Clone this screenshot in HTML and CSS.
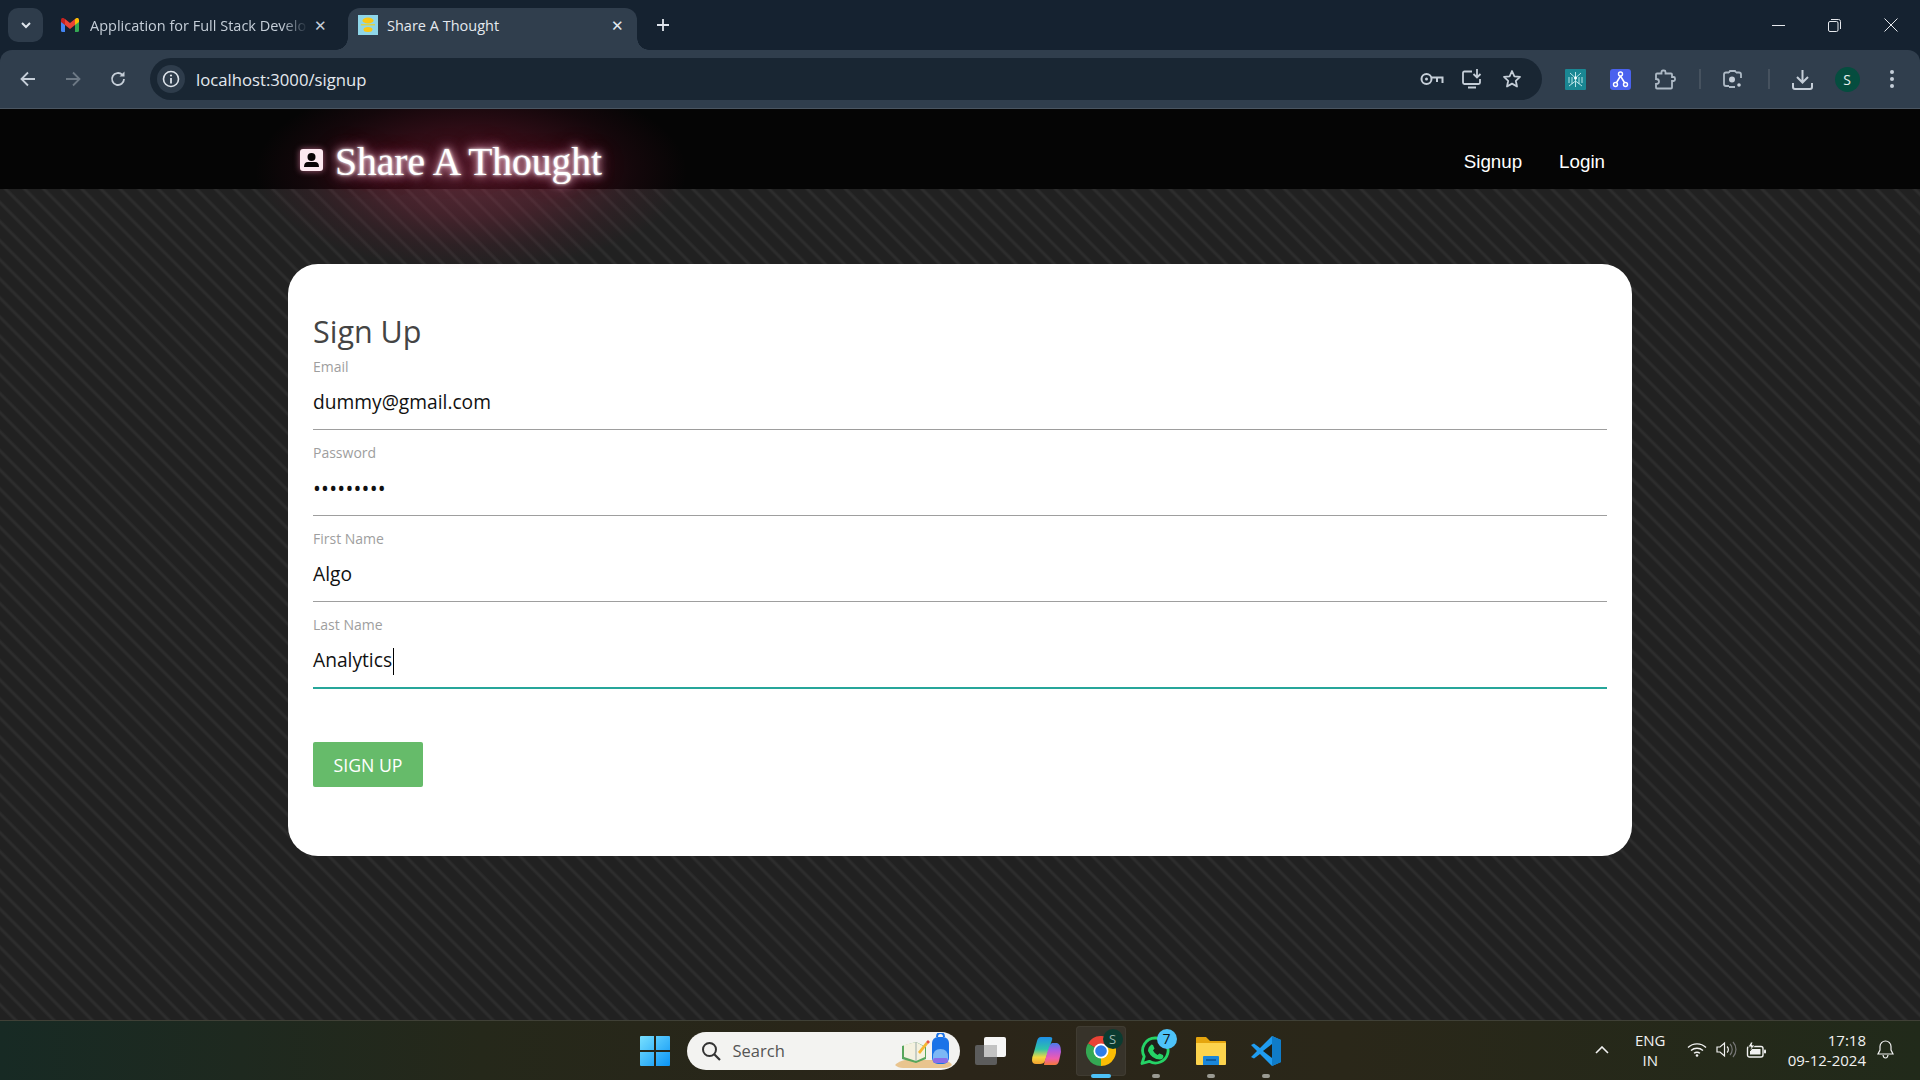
FILE: index.html
```html
<!DOCTYPE html>
<html lang="en">
<head>
    <meta charset="UTF-8">
    <meta name="viewport" content="width=device-width, initial-scale=1.0">
    <title>Share A Thought</title>
    <link rel="stylesheet" href="styles.css">
</head>
<body>

    <!-- Browser tabs -->
    <div class="tab-strip">
        <div class="tab-menu">
            <svg width="14" height="14" viewBox="0 0 14 14"><path d="M3 5l4 4 4-4" fill="none" stroke="#dfe5ec" stroke-width="2"/></svg>
        </div>
        <div class="tab">
            <svg class="tab-icon" width="18" height="14" viewBox="0 0 18 14">
                <path d="M0 3v9.500q0 1.500 1.500 1.500H4V6.500z" fill="#4285f4"/>
                <path d="M14 6.500V14h2.500q1.500 0 1.500-1.500V3z" fill="#34a853"/>
                <path d="M14 1v6l4-3V2q0-2.500-2.500-2z" fill="#fbbc04"/>
                <path d="M4 7V1L9 5l5-4v6L9 11z" fill="#ea4335"/>
                <path d="M0 2v2l4 3V1L2.500 0Q0-.5 0 2z" fill="#c5221f"/>
            </svg>
            <span class="tab-title tab-title-fade">Application for Full Stack Develo</span>
            <span class="tab-close">&#10005;</span>
        </div>
        <div class="tab tab-active">
            <svg class="tab-icon" width="20" height="20" viewBox="0 0 20 20">
                <rect width="20" height="20" fill="#8fd6e8"/>
                <ellipse cx="10" cy="5.500" rx="5.500" ry="3" fill="#fbc715"/>
                <ellipse cx="10" cy="14.500" rx="4.500" ry="2.500" fill="#fbc715"/>
                <rect x="3" y="9" width="14" height="1.500" fill="#d9d34a"/>
            </svg>
            <span class="tab-title">Share A Thought</span>
            <span class="tab-close">&#10005;</span>
        </div>
        <span class="tab-new">
            <svg width="14" height="14" viewBox="0 0 14 14"><path d="M7 1v12M1 7h12" stroke="#dfe5ec" stroke-width="1.800"/></svg>
        </span>
        <div class="window-controls">
            <svg width="13" height="13" viewBox="0 0 13 13"><path d="M0 6.500h13" stroke="#e6e9ed"/></svg>
            <svg width="13" height="13" viewBox="0 0 13 13"><rect x=".5" y="2.500" width="9.500" height="10" rx="1.500" fill="none" stroke="#e6e9ed"/><path d="M3 .5h7.500q2 0 2 2V10" fill="none" stroke="#e6e9ed"/></svg>
            <svg width="14" height="14" viewBox="0 0 14 14"><path d="M.5.500l13 13M13.500.5l-13 13" stroke="#e6e9ed"/></svg>
        </div>
    </div>

    <!-- Address bar -->
    <div class="toolbar">
        <div class="nav-buttons">
            <span class="tool"><svg width="18" height="18" viewBox="0 0 18 18"><path d="M16 9H3M9 2.500L2.500 9 9 15.500" fill="none" stroke="#c5ced8" stroke-width="1.800"/></svg></span>
            <span class="tool"><svg width="18" height="18" viewBox="0 0 18 18"><path d="M2 9h13M9 2.500L15.500 9 9 15.500" fill="none" stroke="#6d7985" stroke-width="1.800"/></svg></span>
            <span class="tool"><svg width="18" height="18" viewBox="0 0 18 18"><path d="M15 9a6 6 0 1 1-1.800-4.300" fill="none" stroke="#c5ced8" stroke-width="1.800"/><path d="M15.500 1.500v5h-5z" fill="#c5ced8"/></svg></span>
        </div>
        <div class="omnibox">
            <span class="site-info"><svg width="18" height="18" viewBox="0 0 18 18"><circle cx="9" cy="9" r="7.500" fill="none" stroke="#dde3ea" stroke-width="1.600"/><path d="M9 8v5.500" stroke="#dde3ea" stroke-width="1.800"/><circle cx="9" cy="5.500" r="1.100" fill="#dde3ea"/></svg></span>
            <span class="url">localhost:3000/signup</span>
            <div class="omnibox-actions">
                <span class="tool"><svg width="24" height="16" viewBox="0 0 24 16"><circle cx="6.500" cy="8" r="5" fill="none" stroke="#c5ced8" stroke-width="2"/><circle cx="6.500" cy="8" r="1.500" fill="#c5ced8"/><path d="M11.500 6.500H22.500V12M17 7v4" fill="none" stroke="#c5ced8" stroke-width="2"/></svg></span>
                <span class="tool"><svg width="21" height="20" viewBox="0 0 21 20"><path d="M10 2.500H2.500q-1.500 0-1.500 1.500v9.500q0 1.500 1.500 1.500h14q1.500 0 1.500-1.500V10" fill="none" stroke="#c5ced8" stroke-width="1.800"/><path d="M6 18.500h8" stroke="#c5ced8" stroke-width="2"/><path d="M15 0v8M11.500 5l3.500 3.500L18.500 5" fill="none" stroke="#c5ced8" stroke-width="1.800"/></svg></span>
                <span class="tool"><svg width="20" height="20" viewBox="0 0 20 20"><path d="M10 2l2.400 5.300 5.600.6-4.200 3.900 1.200 5.700L10 14.600l-5 2.900 1.200-5.700L2 7.900l5.600-.6z" fill="none" stroke="#c5ced8" stroke-width="1.800" stroke-linejoin="round"/></svg></span>
            </div>
        </div>
        <div class="toolbar-actions">
            <span class="tool"><svg width="21" height="21" viewBox="0 0 21 21"><rect width="21" height="21" rx="1" fill="#1a8793"/><path d="M10.500 3v15M10.500 9L5 4M10.500 9L16 4M10.500 12L4 17M10.500 12L17 17M4 8v6M17 8v6M7 8v7M14 8v7" stroke="#c9eef0" stroke-width=".9" fill="none"/><circle cx="10.500" cy="9" r="1.500" fill="#fff"/></svg></span>
            <span class="tool"><svg width="21" height="21" viewBox="0 0 21 21"><rect width="21" height="21" rx="3" fill="#4a62ee"/><path d="M10.500 7L6 14.500M10.500 7l4.500 7.500" stroke="#fff" stroke-width="1.500"/><circle cx="10.500" cy="5" r="2" fill="#4a62ee" stroke="#fff" stroke-width="1.400"/><circle cx="5.500" cy="15.500" r="2" fill="#4a62ee" stroke="#fff" stroke-width="1.400"/><circle cx="15.500" cy="15.500" r="2" fill="#4a62ee" stroke="#fff" stroke-width="1.400"/></svg></span>
            <span class="tool"><svg width="21" height="21" viewBox="0 0 21 21"><path d="M2 4.500h4.500V3q0-1.500 1.500-1.500h1q1.500 0 1.500 1.500v1.500H16q1 0 1 1V8h1.500q1.500 0 1.500 1.500v1q0 1.500-1.500 1.500H17v6.500q0 1-1 1H2q-1 0-1-1V15q3 0 3-2.500T1 10V5.500q0-1 1-1z" fill="none" stroke="#aebac6" stroke-width="1.800"/></svg></span>
            <span class="toolbar-sep"></span>
            <span class="tool tool-lens"><svg width="19" height="19" viewBox="0 0 19 19"><path d="M6 2.500H3q-2 0-2 2V14q0 2 2 2h3M13 2.500h3q2 0 2 2V8M6 2.500l1-1.500h5l1 1.500M6 17h6" fill="none" stroke="#aebac6" stroke-width="1.800"/><circle cx="9" cy="9.500" r="3" fill="#c5ced8"/><circle cx="16" cy="15" r="1.800" fill="#c5ced8"/></svg></span>
            <span class="toolbar-sep toolbar-sep-2"></span>
            <span class="tool tool-download"><svg width="21" height="21" viewBox="0 0 21 21"><path d="M10.500 1v12M5 8l5.500 5.500L16 8" fill="none" stroke="#c5ced8" stroke-width="2"/><path d="M1 14v4q0 2 2 2h15q2 0 2-2v-4" fill="none" stroke="#c5ced8" stroke-width="2"/></svg></span>
            <span class="tool"><span class="avatar">S</span></span>
            <span class="tool"><svg width="6" height="20" viewBox="0 0 6 20"><circle cx="3" cy="3" r="2" fill="#c5ced8"/><circle cx="3" cy="10" r="2" fill="#c5ced8"/><circle cx="3" cy="17" r="2" fill="#c5ced8"/></svg></span>
        </div>
    </div>

    <div class="page">
        <nav class="navbar">
            <div class="container nav-inner">
                <a class="brand" href="#">
                    <svg class="brand-icon" width="23" height="22" viewBox="0 0 23 22"><path d="M3 0h17q3 0 3 3v16q0 3-3 3H3q-3 0-3-3V3q0-3 3-3z" fill="#fde8f0"/><circle cx="11.500" cy="8" r="4" fill="#0a0406"/><path d="M4 18q0-5 4-5h7q4 0 4 5z" fill="#0a0406"/></svg>
                    Share A Thought
                </a>
                <ul class="nav-links">
                    <li><a href="#">Signup</a></li>
                    <li><a href="#">Login</a></li>
                </ul>
            </div>
        </nav>

        <div class="container">
            <form class="card">
                <h2 class="card-title">Sign Up</h2>

                <div class="field">
                    <label>Email</label>
                    <div class="field-value">dummy@gmail.com</div>
                </div>
                <div class="field">
                    <label>Password</label>
                    <div class="field-value field-password">&bull;&bull;&bull;&bull;&bull;&bull;&bull;&bull;&bull;</div>
                </div>
                <div class="field">
                    <label>First Name</label>
                    <div class="field-value">Algo</div>
                </div>
                <div class="field field-focus">
                    <label>Last Name</label>
                    <div class="field-value">Analytics<span class="caret"></span></div>
                </div>

                <button class="btn-submit" type="button">Sign Up</button>
            </form>
        </div>
    </div>

    <!-- Windows taskbar -->
    <div class="taskbar">
        <div></div>
        <div class="task-center">
            <span class="slot">
                <svg width="30" height="30" viewBox="0 0 30 30">
                    <defs><linearGradient id="win" x1="0" y1="0" x2="1" y2="1"><stop offset="0" stop-color="#78e0ff"/><stop offset="1" stop-color="#0a94f5"/></linearGradient></defs>
                    <path d="M1 0h13v14H0V1q0-1 1-1zM16 0h13q1 0 1 1v13H16zM0 16h14v14H1q-1 0-1-1zM16 16h14v13q0 1-1 1H16z" fill="url(#win)"/>
                </svg>
            </span>
            <div class="search-box">
                <svg width="20" height="20" viewBox="0 0 20 20"><circle cx="8.500" cy="8.500" r="6.500" fill="none" stroke="#333" stroke-width="2"/><path d="M13 13l6 6" stroke="#333" stroke-width="2.200"/></svg>
                <span class="search-text">Search</span>
                <svg class="search-art" width="58" height="36" viewBox="0 0 58 36">
                    <path d="M0 32q4-4 10-5h38q7 1 9 5-3 3-8 3H8q-5 0-8-3z" fill="#e9c48e"/>
                    <path d="M7 13l14-4 10 5v12l-10 4-14-4z" fill="#58a65c"/>
                    <path d="M9 12l12-3 9 5v10l-9 4-12-4z" fill="#f4f1df"/>
                    <path d="M21 9v19" stroke="#9aa" stroke-width="1"/>
                    <path d="M23 19l8-10 2 2-8 10z" fill="#f5b731"/>
                    <path d="M31 9l2-2 2 2-2 2z" fill="#e8543f"/>
                    <rect x="37" y="4" width="17" height="27" rx="6" fill="#1a73e8"/>
                    <path d="M42 4q0-4 3.500-4T49 4" fill="none" stroke="#1a73e8" stroke-width="2"/>
                    <path d="M38 24q0-8 7.500-8t7.500 8v3H38z" fill="#7cb8f5"/>
                    <rect x="38" y="25" width="15" height="5" rx="2" fill="#8a6ee8"/>
                </svg>
            </div>
            <span class="slot slot-task">
                <svg width="31" height="28" viewBox="0 0 31 28">
                    <rect x="9" width="22" height="20" rx="2" fill="#f6f6f6"/>
                    <rect y="8" width="22" height="20" rx="2" fill="#5c5c5c"/>
                    <rect x="9" y="8" width="13" height="12" fill="#c2c2c2"/>
                </svg>
            </span>
            <span class="slot">
                <svg width="30" height="30" viewBox="0 0 30 30">
                    <defs>
                        <linearGradient id="cop1" x1="0" y1="0" x2="0" y2="1"><stop offset="0" stop-color="#1f8fe8"/><stop offset=".45" stop-color="#2fc4a8"/><stop offset=".75" stop-color="#f4d83f"/><stop offset="1" stop-color="#f5a12f"/></linearGradient>
                        <linearGradient id="cop2" x1="0" y1="0" x2="0" y2="1"><stop offset="0" stop-color="#4a7de8"/><stop offset=".35" stop-color="#b05ae0"/><stop offset=".7" stop-color="#ee5cae"/><stop offset="1" stop-color="#f47a3a"/></linearGradient>
                    </defs>
                    <path d="M10 1h9q3 0 2 3l-7 21q-1 3-5 3H5q-4 0-4-4 0-3 2-8L6 5q1-4 4-4z" fill="url(#cop1)"/>
                    <path d="M13 29h11q3 0 4-4l2-9q0-8-4-9h-5q-2 1-3 4l-4 13q-1 4-1 5z" fill="url(#cop2)"/>
                </svg>
            </span>
            <span class="slot slot-active">
                <svg width="30" height="30" viewBox="0 0 30 30">
                    <path d="M15 15L2 7.500A15 15 0 0 1 28 7.500z" fill="#ea4335"/>
                    <path d="M15 15L28 7.500A15 15 0 0 1 15 30z" fill="#fbbc04"/>
                    <path d="M15 15L15 30A15 15 0 0 1 2 7.500z" fill="#34a853"/>
                    <circle cx="15" cy="15" r="7.500" fill="#fff"/>
                    <circle cx="15" cy="15" r="5.800" fill="#2f7de8"/>
                </svg>
                <span class="chrome-badge">S</span>
                <span class="run-active"></span>
            </span>
            <span class="slot">
                <svg width="31" height="31" viewBox="0 0 31 31">
                    <path d="M15.500 3a12.500 12.500 0 1 1-6.200 23.300L2 28.500l2.200-7A12.500 12.500 0 0 1 15.500 3z" fill="#1d2018" stroke="#25d366" stroke-width="2.800" stroke-linejoin="round"/>
                    <path d="M11 9.500l2 .5 1.500 3.500-1.500 2q1.500 3 4.500 4.500l2-1.500 3.500 1.500.5 2q-1 2.500-3.500 2.500-8 0-12-8.500 0-4 3-6z" fill="#25d366"/>
                </svg>
                <span class="wa-badge">7</span>
                <span class="run-dot"></span>
            </span>
            <span class="slot">
                <svg width="30" height="28" viewBox="0 0 30 28">
                    <path d="M1 0h9l4 4h15q1 0 1 1v4H0V1q0-1 1-1z" fill="#e5a50e"/>
                    <path d="M0 6h30v21q0 1-1 1H1q-1 0-1-1z" fill="#fcd34d"/>
                    <path d="M7 20q0-1 1-1h14q1 0 1 1v8H7z" fill="#1a86d9"/>
                    <path d="M10 23h10" stroke="#0b4f8c" stroke-width="1.500"/>
                </svg>
                <span class="run-dot"></span>
            </span>
            <span class="slot">
                <svg width="30" height="30" viewBox="0 0 30 30">
                    <path d="M21 0L9 12 3 7.500 0 9l6 6-6 6 3 1.500L9 18l12 12 9-4V4z" fill="#1f9cf0"/>
                    <path d="M21 8l-9 7 9 7z" fill="#1d2018"/>
                    <path d="M21 0l9 4v22l-9 4z" fill="#0f7cc9"/>
                </svg>
                <span class="run-dot"></span>
            </span>
        </div>
        <div class="tray">
            <svg class="tray-chevron" width="14" height="8" viewBox="0 0 14 8"><path d="M1 7l6-6 6 6" fill="none" stroke="#f1f1f1" stroke-width="1.600"/></svg>
            <div class="tray-lang">ENG<br>IN</div>
            <svg class="tray-wifi" width="20" height="15" viewBox="0 0 20 15"><path d="M1 5.500a13 13 0 0 1 18 0M4 8.500a9 9 0 0 1 12 0M7 11.300a5 5 0 0 1 6 0" fill="none" stroke="#f1f1f1" stroke-width="1.400"/><circle cx="10" cy="13.500" r="1.300" fill="#f1f1f1"/></svg>
            <svg class="tray-sound" width="21" height="17" viewBox="0 0 21 17"><path d="M1 6v5h3l4.500 4V2L4 6z" fill="none" stroke="#f1f1f1" stroke-width="1.200"/><path d="M11 5.500a4 4 0 0 1 0 6" fill="none" stroke="#f1f1f1" stroke-width="1.200"/><path d="M14 3a8 8 0 0 1 0 11M17 1a11 11 0 0 1 0 15" fill="none" stroke="#777" stroke-width="1.200"/></svg>
            <svg class="tray-battery" width="20" height="16" viewBox="0 0 20 16"><rect x="1.500" y="4.500" width="15.500" height="10.500" rx="2" fill="#222a18" stroke="#f1f1f1" stroke-width="1.400"/><rect x="4" y="7" width="10.500" height="5.500" fill="#f1f1f1"/><rect x="18" y="7.500" width="2" height="4" rx="1" fill="#f1f1f1"/><path d="M5 0L2 5h3L4 9l5-6H6l1-3z" fill="#f1f1f1" stroke="#222a18" stroke-width=".8"/></svg>
            <div class="tray-clock">17:18<br>09-12-2024</div>
            <svg class="tray-bell" width="17" height="19" viewBox="0 0 17 19"><path d="M8.500 1a5.500 5.500 0 0 0-5.500 5.500V10l-2 4h15l-2-4V6.500A5.500 5.500 0 0 0 8.500 1zM6 15q.5 3 2.500 3t2.500-3" fill="none" stroke="#f1f1f1" stroke-width="1.200"/></svg>
        </div>
    </div>

</body>
</html>
```

FILE: styles.css
```css
* {
    box-sizing: border-box;
}

html, body {
    height: 100%;
}

body {
    margin: 0;
    display: flex;
    flex-direction: column;
    height: 1080px;
    overflow: hidden;
    background-color: #152230;
    font-family: "Open Sans", "Noto Sans", sans-serif;
}

a {
    color: inherit;
    text-decoration: none;
}

/* Tab strip */
.tab-strip {
    display: flex;
    align-items: flex-end;
    height: 50px;
    padding-left: 8px;
    background-color: #152230;
    color: #c5ced8;
    font-size: 14.5px;
}

.tab-menu {
    display: flex;
    align-items: center;
    justify-content: center;
    width: 35px;
    height: 34px;
    margin-bottom: 8px;
    border-radius: 10px;
    background-color: #2e3c4b;
}

.tab {
    position: relative;
    display: flex;
    align-items: center;
    width: 298px;
    height: 42px;
    margin-left: 7px;
    padding: 0 18px 8px 11px;
}

.tab-active {
    width: 289px;
    margin-left: 0;
    padding: 0 10px 8px;
    border-radius: 12px 12px 0 0;
    background-color: #303e4d;
    color: #e4e9ef;
}

.tab-active::before,
.tab-active::after {
    content: "";
    position: absolute;
    bottom: 0;
    width: 12px;
    height: 12px;
}

.tab-active::before {
    left: -12px;
    background: radial-gradient(circle at 0 0, #152230 11.5px, #303e4d 12px);
}

.tab-active::after {
    right: -12px;
    background: radial-gradient(circle at 100% 0, #152230 11.5px, #303e4d 12px);
}

.tab-icon {
    flex-shrink: 0;
}

.tab-title {
    flex: 1;
    margin-left: 11px;
    white-space: nowrap;
    overflow: hidden;
}

.tab-active .tab-title {
    margin-left: 9px;
}

.tab-title-fade {
    -webkit-mask-image: linear-gradient(to right, #000 88%, transparent);
    mask-image: linear-gradient(to right, #000 88%, transparent);
}

.tab-close {
    width: 20px;
    margin-left: 2px;
    font-size: 15px;
    text-align: center;
}

.tab-new {
    display: flex;
    align-items: center;
    justify-content: center;
    width: 30px;
    height: 42px;
    margin-left: 11px;
    padding-bottom: 8px;
}

.window-controls {
    display: flex;
    align-items: center;
    gap: 43px;
    height: 50px;
    margin-left: auto;
    padding-right: 22px;
}

/* Address bar */
.toolbar {
    display: flex;
    align-items: center;
    height: 59px;
    padding: 0 10px;
    border-bottom: 1px solid #4a5561;
    border-radius: 12px 12px 0 0;
    background-color: #303e4d;
}

.tool {
    display: flex;
    align-items: center;
    justify-content: center;
    flex-shrink: 0;
    width: 36px;
    height: 36px;
}

.nav-buttons {
    display: flex;
    gap: 9px;
}

.omnibox {
    display: flex;
    align-items: center;
    flex: 1;
    height: 42px;
    margin: 0 15px 0 14px;
    padding: 0 12px 0 7px;
    border-radius: 21px;
    background-color: #192633;
}

.site-info {
    display: flex;
    align-items: center;
    justify-content: center;
    width: 28px;
    height: 28px;
    border-radius: 50%;
    background-color: #2e3c4b;
}

.url {
    margin-left: 11px;
    color: #e4e9ef;
    font-size: 16.7px;
}

.omnibox-actions {
    display: flex;
    gap: 4px;
    margin-left: auto;
}

.toolbar-actions {
    display: flex;
    align-items: center;
    gap: 9px;
}

.toolbar-sep {
    width: 2px;
    height: 20px;
    margin-left: 7px;
    background-color: #46525f;
}

.toolbar-sep-2 {
    margin-left: 9px;
}

.tool-lens {
    margin-left: 4px;
}

.tool-download {
    margin-left: 5px;
}

.avatar {
    display: flex;
    align-items: center;
    justify-content: center;
    width: 25px;
    height: 25px;
    border-radius: 50%;
    background-color: #054d3f;
    color: #e8f0ee;
    font-size: 14px;
}

/* Site */
.page {
    flex: 1;
    overflow: hidden;
    background-color: #212121;
    background-image: repeating-linear-gradient(45deg, #212121 0, #212121 8.5px, #2d2d2d 10.5px, #2d2d2d 11.5px, #212121 13.5px);
}

.container {
    width: 1344px;
    margin: 0 auto;
}

.navbar {
    position: relative;
    z-index: 1;
    height: 80px;
    background-color: #050505;
}

.nav-inner {
    display: flex;
    align-items: center;
    justify-content: space-between;
    height: 100%;
    padding: 26px 27px 0 12px;
}

.brand {
    position: relative;
    display: flex;
    align-items: center;
    gap: 12px;
    color: #fff;
    font-family: "Liberation Serif", serif;
    font-size: 39.5px;
    text-shadow: 0 0 3px #fff, 0 0 8px #ffd4e4, 0 0 14px rgba(255, 130, 175, .7), 0 0 30px rgba(235, 40, 100, .3);
}

/* red halo, spills out of the navbar */
.brand::before {
    content: "";
    position: absolute;
    z-index: -1;
    top: -65px;
    bottom: -85px;
    left: -45px;
    right: -85px;
    background: radial-gradient(closest-side, rgba(215, 60, 100, .3) 0, rgba(190, 40, 80, .22) 45%, rgba(170, 30, 70, .09) 75%, transparent 100%);
}

.brand-icon {
    margin-top: -4px;
    filter: drop-shadow(0 0 3px rgba(255, 150, 190, .6));
}

.nav-links {
    display: flex;
    gap: 37px;
    margin: 0;
    padding: 0;
    list-style: none;
    color: #fff;
    font-family: "Liberation Sans", sans-serif;
    font-size: 18.75px;
}

.card {
    height: 592px;
    margin-top: 75px;
    padding: 44px 25px 0;
    border-radius: 30px;
    background-color: #fff;
}

.card-title {
    height: 36px;
    margin: 0;
    color: #444;
    font-size: 30.5px;
    font-weight: 400;
    line-height: 47px;
}

.field {
    padding-top: 15px;
}

.field label {
    display: block;
    height: 16px;
    color: #9e9e9e;
    font-size: 14px;
    line-height: 16px;
}

.field-value {
    height: 42px;
    margin: 13px 0 0;
    padding-bottom: 14px;
    border-bottom: 1px solid #9e9e9e;
    color: #111;
    font-size: 19.2px;
    line-height: 28px;
}

.field-password {
    font-size: 21px;
    letter-spacing: .2px;
}

.field-focus .field-value {
    border-bottom-color: #26a69a;
    box-shadow: 0 1px 0 0 #26a69a;
}

.caret {
    display: inline-block;
    width: 1px;
    height: 27px;
    margin-left: 1px;
    background-color: #000;
    vertical-align: middle;
}

.btn-submit {
    display: block;
    width: 110px;
    height: 45px;
    margin-top: 54px;
    border: none;
    border-radius: 2px;
    background-color: #66bb6a;
    color: #fff;
    font-family: inherit;
    font-size: 17.7px;
    text-transform: uppercase;
}

/* Taskbar */
.taskbar {
    display: grid;
    grid-template-columns: 1fr auto 1fr;
    align-items: center;
    height: 60px;
    border-top: 1px solid #3f4036;
    background: linear-gradient(to right, #172a24 0, #25281a 25%, #2b2519 50%, #2a2719 70%, #212a1a 100%);
    color: #f1f1f1;
}

.task-center {
    display: flex;
    align-items: center;
    gap: 5px;
}

.slot {
    position: relative;
    display: flex;
    align-items: center;
    justify-content: center;
    width: 50px;
    height: 50px;
    border-radius: 4px;
}

.slot-task {
    margin-left: 1px;
}

.slot-active {
    background-color: #37332a;
    box-shadow: inset 0 0 0 1px #403c32;
}

.search-box {
    display: flex;
    align-items: center;
    width: 273px;
    height: 38px;
    margin-left: 2px;
    padding-left: 14px;
    border-radius: 19px;
    background-color: #f3f3f1;
}

.search-text {
    margin-left: 12px;
    color: #555;
    font-size: 16.5px;
}

.search-art {
    margin-left: auto;
    margin-right: 7px;
}

.chrome-badge {
    position: absolute;
    top: 3px;
    right: 3px;
    display: flex;
    align-items: center;
    justify-content: center;
    width: 20px;
    height: 20px;
    border-radius: 50%;
    background-color: #0b3b30;
    color: #9db8b0;
    font-size: 13px;
}

.wa-badge {
    position: absolute;
    top: 3px;
    right: 4px;
    display: flex;
    align-items: center;
    justify-content: center;
    width: 20px;
    height: 20px;
    border-radius: 50%;
    background-color: #4dc2f8;
    color: #111;
    font-size: 14px;
}

.run-active,
.run-dot {
    position: absolute;
    bottom: -2px;
    height: 4px;
    border-radius: 2px;
}

.run-active {
    left: 15px;
    width: 20px;
    background-color: #4dc2f8;
}

.run-dot {
    left: 21px;
    width: 8px;
    background-color: #9a9a92;
}

.tray {
    display: flex;
    align-items: center;
    justify-content: flex-end;
    padding: 0 26px 2px 0;
    font-size: 15px;
}

.tray-lang {
    width: 40px;
    margin-left: 21px;
    line-height: 20px;
    text-align: center;
}

.tray-wifi {
    margin-left: 17px;
}

.tray-sound {
    margin-left: 9px;
}

.tray-battery {
    margin-left: 8.5px;
}

.tray-clock {
    margin-left: 22px;
    line-height: 20px;
    text-align: right;
}

.tray-bell {
    margin-left: 11px;
}
```
